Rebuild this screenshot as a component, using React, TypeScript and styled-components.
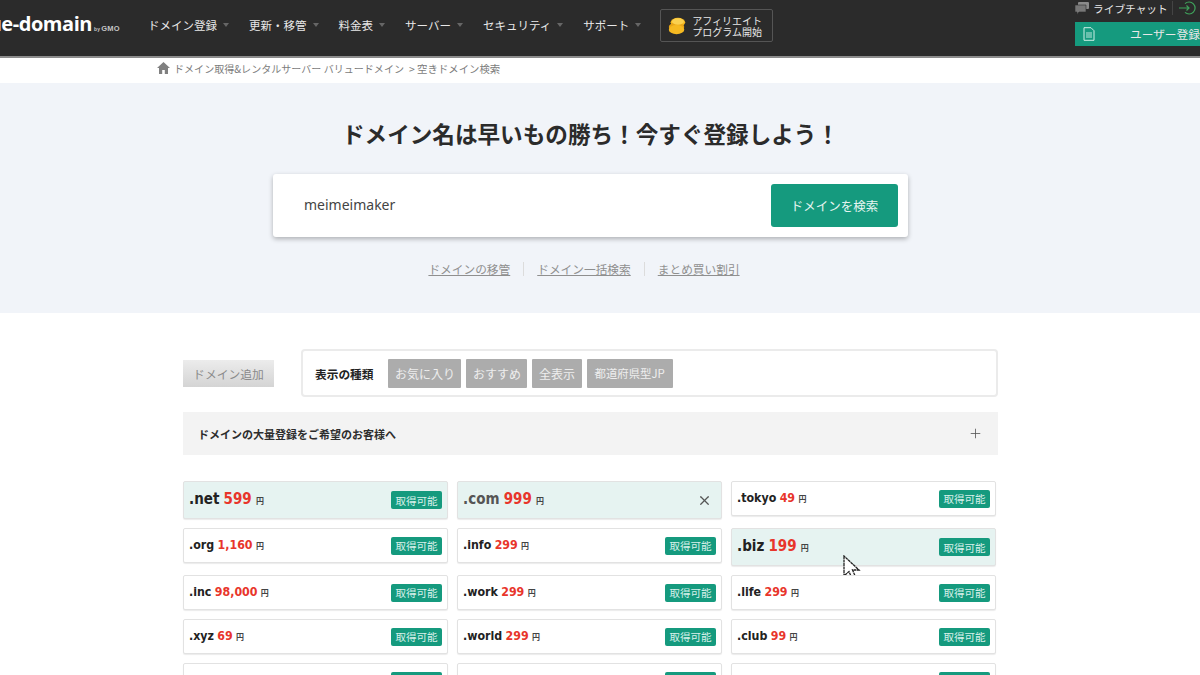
import React from "react";
import styled, { createGlobalStyle } from "styled-components";
import { X, Plus } from "lucide-react";

const GlobalStyle = createGlobalStyle`
  html, body {
    margin: 0;
    padding: 0;
    width: 1200px;
    height: 675px;
    overflow: hidden;
    background: #fff;
    font-family: "Noto Sans CJK JP", "Noto Sans", sans-serif;
  }
  * { box-sizing: border-box; }
  svg { flex-shrink: 0; }
`;

const navItems = ["ドメイン登録", "更新・移管", "料金表", "サーバー", "セキュリティ", "サポート"];

type Tld = { name: string; price: string; featured?: boolean; mode?: "thin" | "close" };

const columns: Tld[][] = [
  [
    { name: ".net", price: "599", featured: true },
    { name: ".org", price: "1,160" },
    { name: ".inc", price: "98,000" },
    { name: ".xyz", price: "69" },
    { name: ".mx", price: "899" },
  ],
  [
    { name: ".com", price: "999", featured: true, mode: "close" },
    { name: ".info", price: "299" },
    { name: ".work", price: "299" },
    { name: ".world", price: "299" },
    { name: ".website", price: "199" },
  ],
  [
    { name: ".tokyo", price: "49" },
    { name: ".biz", price: "199", featured: true },
    { name: ".life", price: "299" },
    { name: ".club", price: "99" },
    { name: ".online", price: "99" },
  ],
];

const rows = columns[0].map((_, r) => columns.map((c) => c[r]));

export default function App() {
  return (
    <Page>
      <GlobalStyle />
      <Header>
        <Logo>
          <LogoClip>
            <LogoWord>value-domain</LogoWord>
          </LogoClip>
          <LogoBy>
            <small>by</small>GMO
          </LogoBy>
        </Logo>
        <Nav>
          {navItems.map((n) => (
            <NavItem key={n}>
              {n}
              <Caret />
            </NavItem>
          ))}
        </Nav>
        <Affiliate>
          <svg width="20" height="20" viewBox="0 0 22 22">
            <ellipse cx="12" cy="7" rx="8" ry="5" fill="#f5b921" />
            <ellipse cx="10.5" cy="12" rx="8.5" ry="5" fill="#e9a516" />
            <ellipse cx="10.5" cy="15" rx="8.5" ry="5" fill="#f5b921" />
            <ellipse cx="12" cy="6" rx="6.5" ry="3.5" fill="#fad04f" />
          </svg>
          <AffiliateText>
            アフィリエイト
            <br />
            プログラム開始
          </AffiliateText>
        </Affiliate>
        <HeaderRight>
          <ChatRow>
            <svg width="14" height="14" viewBox="0 0 14 14">
              <rect x="3" y="1" width="11" height="7" rx="1" fill="#8a8a8a" />
              <path d="M0 4h11v7H4l-2 2.5V11H0z" fill="#777" stroke="#2b2b2b" strokeWidth=".6" />
            </svg>
            <ChatLabel>ライブチャット</ChatLabel>
            <ChatDivider />
            <svg width="18" height="14" viewBox="0 0 18 14">
              <path d="M6 2.6A6 6 0 1 1 6 11.4" fill="none" stroke="#3fa35b" strokeWidth="1.2" />
              <path d="M0 7h10M7.5 4.5 10 7l-2.5 2.5" fill="none" stroke="#3fa35b" strokeWidth="1.2" />
            </svg>
            <ChatLabel>ログイン</ChatLabel>
          </ChatRow>
          <SignupButton>
            <svg width="12" height="14" viewBox="0 0 12 14">
              <path d="M1 .7h7l3 3v9.6H1z" fill="none" stroke="#cfeee6" strokeWidth="1" />
              <path d="M3 6h6M3 8h6M3 10h6" stroke="#cfeee6" strokeWidth=".9" />
            </svg>
            <SignupLabel>ユーザー登録</SignupLabel>
          </SignupButton>
        </HeaderRight>
      </Header>

      <Breadcrumb>
        <svg width="13" height="12" viewBox="0 0 13 12">
          <path d="M6.5 0 0 6h2v6h3.2V8h2.6v4H11V6h2z" fill="#808080" />
        </svg>
        <span>ドメイン取得&amp;レンタルサーバー バリュードメイン</span>
        <span>&gt; 空きドメイン検索</span>
      </Breadcrumb>

      <Hero>
        <HeroTitle>ドメイン名は早いもの勝ち！今すぐ登録しよう！</HeroTitle>
        <SearchBox>
          <SearchValue>meimeimaker</SearchValue>
          <SearchButton>ドメインを検索</SearchButton>
        </SearchBox>
        <HeroLinks>
          <HeroLink>ドメインの移管</HeroLink>
          <HeroDivider />
          <HeroLink>ドメイン一括検索</HeroLink>
          <HeroDivider />
          <HeroLink>まとめ買い割引</HeroLink>
        </HeroLinks>
      </Hero>

      <Content>
        <FilterRow>
          <AddButton>ドメイン追加</AddButton>
          <FilterBox>
            <FilterLabel>表示の種類</FilterLabel>
            <FilterChip>お気に入り</FilterChip>
            <FilterChip>おすすめ</FilterChip>
            <FilterChip>全表示</FilterChip>
            <FilterChip $small>都道府県型JP</FilterChip>
          </FilterBox>
        </FilterRow>
        <Accordion>
          <AccordionTitle>ドメインの大量登録をご希望のお客様へ</AccordionTitle>
          <Plus size={15} strokeWidth={1.3} color="#555" />
        </Accordion>
        <Grid>
          {rows.flat().map((t) => (
            <Card key={t.name} $featured={t.featured}>
              <CardName $featured={t.featured} $thin={t.mode === "close"}>
                {t.name} <Price>{t.price}</Price> <Yen>円</Yen>
              </CardName>
              {t.mode === "close" ? (
                <CloseIcon>
                  <X size={15} strokeWidth={2} color="#555" />
                </CloseIcon>
              ) : (
                <Status>取得可能</Status>
              )}
              {t.name === ".biz" && (
                <Cursor width="20" height="27" viewBox="0 0 20 27">
                  <path
                    d="M1 1v20l5-4.500 3.500 8 3.500-1.500-3.500-8H16z"
                    fill="#fff"
                    stroke="#222"
                    strokeWidth="1.300"
                    strokeDasharray="3 .5"
                  />
                </Cursor>
              )}
            </Card>
          ))}
        </Grid>
      </Content>
    </Page>
  );
}

const Page = styled.div`
  width: 1200px;
  height: 675px;
  overflow: hidden;
  color: #333;
`;

const Header = styled.header`
  display: flex;
  height: 58px;
  background: #2b2b2b;
  border-bottom: 2px solid #8c8c8c;
  color: #e8e8e8;
`;

const Logo = styled.div`
  display: flex;
  align-items: baseline;
  width: 148px;
  padding-top: 11px;
  flex-shrink: 0;
`;

const LogoClip = styled.div`
  display: flex;
  justify-content: flex-end;
  width: 92px;
  overflow: hidden;
`;

const LogoWord = styled.span`
  flex-shrink: 0;
  color: #fff;
  font-family: "Open Sans", sans-serif;
  font-size: 20px;
  font-weight: 700;
  letter-spacing: -0.45px;
  line-height: 26px;
`;

const LogoBy = styled.span`
  margin-left: 2px;
  color: #c4c4c4;
  font-family: "Liberation Sans", sans-serif;
  font-size: 7.500px;
  font-weight: 700;
  letter-spacing: 0.2px;
  white-space: nowrap;

  small {
    margin-right: 1px;
    font-size: 5px;
  }
`;

const Nav = styled.nav`
  display: flex;
  align-items: center;
  height: 49px;
  flex-shrink: 0;
`;

const NavItem = styled.div`
  display: flex;
  align-items: center;
  margin-right: 20px;
  font-size: 11.500px;
  white-space: nowrap;
`;

const Caret = styled.i`
  width: 0;
  height: 0;
  margin-left: 6px;
  border-left: 3.5px solid transparent;
  border-right: 3.5px solid transparent;
  border-top: 4px solid #666;
`;

const Affiliate = styled.div`
  display: flex;
  align-items: center;
  gap: 5px;
  width: 113px;
  height: 33px;
  margin: 9px 0 0 -1px;
  padding-left: 6px;
  border: 1px solid #555;
  border-radius: 2px;
  flex-shrink: 0;
`;

const AffiliateText = styled.div`
  font-size: 10px;
  line-height: 11px;
  white-space: nowrap;
`;

const HeaderRight = styled.div`
  display: flex;
  flex-direction: column;
  width: 125px;
  margin-left: auto;
  flex-shrink: 0;
  overflow: hidden;
`;

const ChatRow = styled.div`
  display: flex;
  align-items: center;
  height: 22px;
  padding-bottom: 6px;
  flex-shrink: 0;
`;

const ChatLabel = styled.span`
  margin-left: 4px;
  font-size: 10.700px;
  white-space: nowrap;
  flex-shrink: 0;
`;

const ChatDivider = styled.i`
  width: 1px;
  height: 14px;
  margin: 0 6px 0 4px;
  background: #444;
  flex-shrink: 0;
`;

const SignupButton = styled.div`
  display: flex;
  align-items: center;
  height: 24px;
  padding-left: 8px;
  background: #159a7e;
  flex-shrink: 0;
`;

const SignupLabel = styled.span`
  margin: 0 0 1px 35px;
  font-size: 11.700px;
  white-space: nowrap;
`;

const Breadcrumb = styled.div`
  display: flex;
  align-items: center;
  gap: 4px;
  height: 25px;
  padding: 0 0 5px 157px;
  color: #7c7c7c;
  font-size: 10.050px;
  white-space: nowrap;

  span + span {
    margin-left: 1px;
    font-size: 10.400px;
  }
`;

const Hero = styled.section`
  display: flex;
  flex-direction: column;
  align-items: center;
  height: 230px;
  padding: 38px 19px 0 0;
  background: #f1f4f9;
`;

const HeroTitle = styled.h1`
  margin: 0 0 3px;
  color: #2b2b2b;
  font-size: 22.600px;
  font-weight: 700;
  line-height: 26px;
`;

const SearchBox = styled.div`
  display: flex;
  align-items: center;
  justify-content: space-between;
  width: 635px;
  height: 63px;
  margin-top: 24px;
  padding: 0 10px 0 31px;
  background: #fff;
  border-radius: 3px;
  box-shadow: 0 2px 5px rgba(0, 0, 0, 0.28);
`;

const SearchValue = styled.span`
  margin-bottom: 3px;
  color: #444;
  font-family: "Noto Sans", sans-serif;
  font-size: 14px;
`;

const SearchButton = styled.div`
  display: flex;
  align-items: center;
  justify-content: center;
  width: 127px;
  height: 43px;
  background: #159a7e;
  border-radius: 3px;
  color: #e6f5f1;
  font-size: 12.500px;
`;

const HeroLinks = styled.div`
  display: flex;
  align-items: center;
  margin: 23px 13px 0 0;
`;

const HeroLink = styled.a`
  color: #8f8f8f;
  font-size: 11.700px;
  text-decoration: underline;
  line-height: 18px;
`;

const HeroDivider = styled.i`
  width: 1px;
  height: 14px;
  margin: 0 13px;
  background: #dcdcdc;
`;

const Content = styled.main`
  width: 815px;
  margin: 36px 0 0 183px;
`;

const FilterRow = styled.div`
  display: flex;
  align-items: center;
  gap: 27px;
`;

const AddButton = styled.div`
  display: flex;
  align-items: center;
  justify-content: center;
  width: 91px;
  height: 27px;
  background: linear-gradient(#ececec, #d4d4d4);
  color: #8a8a8a;
  font-size: 11.800px;
`;

const FilterBox = styled.div`
  display: flex;
  align-items: center;
  gap: 5px;
  width: 697px;
  height: 48px;
  padding-left: 12px;
  border: 2px solid #ebebeb;
  border-radius: 4px;
`;

const FilterLabel = styled.span`
  margin-right: 10px;
  color: #222;
  font-size: 11.700px;
  font-weight: 700;
`;

const FilterChip = styled.span<{ $small?: boolean }>`
  display: flex;
  align-items: center;
  height: 29px;
  padding: 0 ${(p) => (p.$small ? "8px" : "6.500px")};
  background: #acacac;
  border-radius: 1px;
  color: #eee;
  font-size: ${(p) => (p.$small ? "11.400px" : "12px")};
`;

const Accordion = styled.div`
  display: flex;
  align-items: center;
  justify-content: space-between;
  height: 43px;
  margin-top: 15px;
  padding: 0 15px;
  background: #f3f3f3;
`;

const AccordionTitle = styled.span`
  color: #2d2d2d;
  font-size: 11px;
  font-weight: 700;
`;

const Grid = styled.div`
  display: grid;
  grid-template-columns: repeat(3, 265px);
  column-gap: 9px;
  row-gap: 9px;
  align-items: start;
  margin-top: 26px;
`;

const Card = styled.div<{ $featured?: boolean }>`
  position: relative;
  display: flex;
  align-items: center;
  justify-content: space-between;
  height: ${(p) => (p.$featured ? "38px" : "35px")};
  padding: 0 5px;
  background: ${(p) => (p.$featured ? "#e6f3f1" : "#fff")};
  border: 1px solid #e2e2e2;
  border-radius: 2px;
  box-shadow: 0 1px 1px rgba(0, 0, 0, 0.08);
`;

const CardName = styled.div<{ $featured?: boolean; $thin?: boolean }>`
  margin-bottom: 2px;
  color: ${(p) => (p.$thin ? "#555" : "#222")};
  font-family: "DejaVu Sans", sans-serif;
  font-stretch: condensed;
  font-size: ${(p) => (p.$featured ? "15px" : "12.300px")};
  font-weight: 700;
  word-spacing: -0.5px;
  white-space: nowrap;
`;

const Price = styled.span`
  color: #e8352b;
`;

const Yen = styled.span`
  color: #444;
  font-family: "Noto Sans CJK JP", sans-serif;
  font-size: 8px;
  font-weight: 700;
`;

const Status = styled.span`
  display: flex;
  align-items: center;
  justify-content: center;
  width: 51px;
  height: 18px;
  background: #159a7e;
  border-radius: 2px;
  color: #d8f0ea;
  font-size: 10.500px;
`;

const CloseIcon = styled.span`
  display: flex;
  margin-right: 4px;
`;

const Cursor = styled.svg`
  position: absolute;
  left: 111px;
  top: 26px;
`;
